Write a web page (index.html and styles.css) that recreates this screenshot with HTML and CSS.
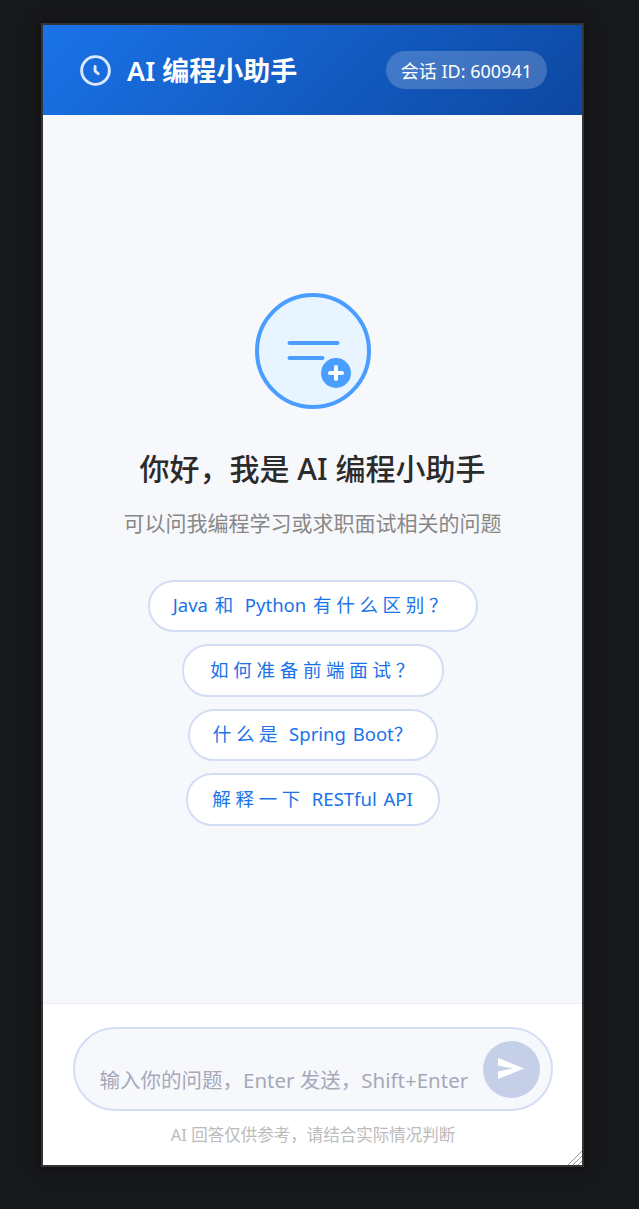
FILE: index.html
```html
<!DOCTYPE html>
<html lang="zh-CN">
<head>
    <meta charset="UTF-8">
    <meta name="viewport" content="width=device-width, initial-scale=1.0">
    <title>AI 编程小助手</title>
    <link rel="stylesheet" href="styles.css">
</head>
<body>
    <div class="app">
        <header class="app-header">
            <div class="brand">
                <svg class="brand-icon" viewBox="0 0 30 30" width="31" height="31" fill="none" stroke="#dce8fb" stroke-width="2.8" stroke-linecap="round" stroke-linejoin="round">
                    <circle cx="15" cy="15" r="13.4"/>
                    <path d="M14.6 11v4.500l3 2.500"/>
                </svg>
                <h1>AI 编程小助手</h1>
            </div>
            <div class="session-pill">会话 ID: 600941</div>
        </header>

        <main class="chat-empty">
            <svg class="empty-icon" viewBox="0 0 116 116" width="116" height="116">
                <circle cx="58" cy="58" r="56" fill="#e8f4ff" stroke="#4a9eff" stroke-width="4"/>
                <path d="M34.500 50h48M34.500 65h33" stroke="#4a9eff" stroke-width="4" stroke-linecap="round" fill="none"/>
                <circle cx="81" cy="80" r="15" fill="#4a9eff"/>
                <path d="M81 74v12M75 80h12" stroke="#fff" stroke-width="4" stroke-linecap="round" fill="none"/>
            </svg>
            <h2>你好，我是 AI 编程小助手</h2>
            <p class="empty-sub">可以问我编程学习或求职面试相关的问题</p>
            <div class="suggestions">
                <button class="suggestion s1">Java <span class="wide">和</span> Python <span class="wide">有什么区别？</span></button>
                <button class="suggestion s2"><span class="wide">如何准备前端面试？</span></button>
                <button class="suggestion s3"><span class="wide">什么是</span> Spring Boot？</button>
                <button class="suggestion s4"><span class="wide">解释一下</span> RESTful API</button>
            </div>
        </main>

        <footer class="composer">
            <div class="input-box">
                <textarea rows="1" placeholder="输入你的问题，Enter 发送，Shift+Enter 换行"></textarea>
                <button class="send-btn" aria-label="发送">
                    <svg viewBox="0 0 26 22" width="26" height="22"><path d="M0 0L26 10.500 0 21 0 13.500 15 10.500 0 7.500Z" fill="#fff"/></svg>
                </button>
            </div>
            <p class="disclaimer">AI 回答仅供参考，请结合实际情况判断</p>
            <svg class="resize-grip" viewBox="0 0 14 14" width="14" height="14" stroke="#9a9a9a" stroke-width="1">
                <path d="M0 14L14 0M5 14L14 5M10 14L14 10"/>
            </svg>
        </footer>
    </div>
</body>
</html>
```

FILE: styles.css
```css
* {
    box-sizing: border-box;
}

html, body {
    height: 100%;
}

body {
    margin: 0;
    padding: 23px 55px 42px 41px;
    background-color: #17181a;
    font-family: "Noto Sans", "Noto Sans CJK SC", sans-serif;
}

.app {
    display: flex;
    flex-direction: column;
    height: 100%;
    border: 2px solid #333437;
    background-color: #f7f8fc;
    box-shadow: 0 0 12px rgba(0, 0, 0, 0.5);
}

.app-header {
    display: flex;
    align-items: center;
    justify-content: space-between;
    height: 90px;
    padding: 2px 35px 0 37px;
    background: linear-gradient(135deg, #1a73e8, #0d47a1);
    color: #fff;
}

.brand {
    display: flex;
    align-items: center;
    gap: 16px;
}

.brand h1 {
    margin: 0;
    font-size: 27px;
    font-weight: 600;
    line-height: 1.2;
}

.session-pill {
    display: flex;
    align-items: center;
    height: 38px;
    margin-top: -2px;
    padding: 0 15px;
    border-radius: 19px;
    background-color: rgba(255, 255, 255, 0.2);
    font-size: 18px;
}

.chat-empty {
    flex: 1;
    display: flex;
    flex-direction: column;
    align-items: center;
    justify-content: center;
}

.chat-empty h2 {
    margin: 38px 0 0;
    font-size: 30px;
    font-weight: 500;
    line-height: 44px;
    color: #2b2b2b;
}

.empty-sub {
    margin: 18px 0 0;
    font-size: 21px;
    line-height: 28px;
    color: #888;
}

.suggestions {
    display: flex;
    flex-direction: column;
    align-items: center;
    gap: 12px;
    margin-top: 43px;
}

.suggestion {
    height: 52.500px;
    padding: 0 0 3px;
    border: 2px solid #d3ddf3;
    border-radius: 26px;
    background-color: #fff;
    font-family: inherit;
    font-size: 18.500px;
    word-spacing: 2px;
    color: #1a73e8;
    cursor: pointer;
}

.s1 { width: 330px; }
.s2 { width: 262px; padding-left: 4px; }
.s3 { width: 250px; }
.s4 { width: 254px; }

.wide {
    letter-spacing: 4.700px;
}

.composer {
    position: relative;
    height: 162px;
    padding: 23px 29px 0 30px;
    border-top: 1px solid #eeeef3;
    background-color: #fff;
}

.input-box {
    display: flex;
    align-items: center;
    height: 84px;
    padding: 0 11.500px 0 24.500px;
    border: 2px solid #d3ddf3;
    border-radius: 42px;
    background-color: #f7f8fc;
}

.input-box textarea {
    flex: 1;
    height: 30px;
    margin-top: 22px;
    padding: 0;
    border: none;
    outline: none;
    overflow: hidden;
    resize: none;
    background: transparent;
    font-family: inherit;
    font-size: 20.500px;
    line-height: 30px;
    min-width: 0;
}

.input-box textarea::placeholder {
    color: #a6a8ba;
}

.send-btn {
    display: flex;
    align-items: center;
    justify-content: center;
    flex-shrink: 0;
    width: 57px;
    height: 57px;
    margin-left: 14px;
    padding: 0;
    border: none;
    border-radius: 50%;
    background-color: #c5d0e8;
}

.disclaimer {
    margin: 12px 0 0;
    text-align: center;
    font-size: 16.500px;
    line-height: 24px;
    color: #bbb;
}

.resize-grip {
    position: absolute;
    right: 0;
    bottom: 0;
}
```
